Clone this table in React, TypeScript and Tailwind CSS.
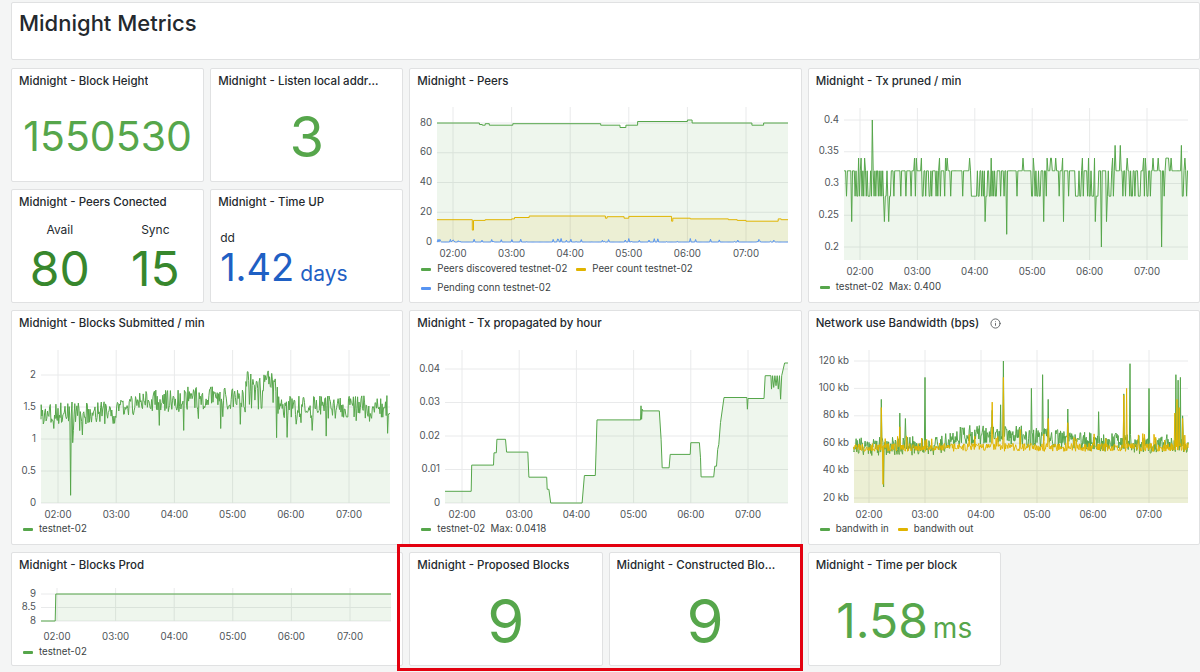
import { Info } from "lucide-react";

type Pt = [number, number];
type Series = { color: string; pts: Pt[]; fill?: boolean };

const GREEN = "#56a64b";
const YELLOW = "#e0b400";
const BLUE = "#5794f2";

function rng(seed: number) {
	let s = seed;
	return () => {
		s = (s * 1664525 + 1013904223) % 4294967296;
		return s / 4294967296;
	};
}

// step function from [t, v] breakpoints
function steps(levels: Pt[], end: number): Pt[] {
	const out: Pt[] = [];
	levels.forEach(([t, v], i) => {
		if (i > 0) out.push([t, levels[i - 1][1]]);
		out.push([t, v]);
	});
	out.push([end, levels[levels.length - 1][1]]);
	return out;
}

function sample(start: number, end: number, dt: number, f: (t: number) => number): Pt[] {
	const out: Pt[] = [];
	for (let t = start; t <= end; t += dt) out.push([t, f(t)]);
	return out;
}

function piece(t: number, segs: Pt[]) {
	let v = segs[0][1];
	for (const [at, val] of segs) if (t >= at) v = val;
	return v;
}

function spikes(t: number, list: Pt[], w = 0.012) {
	for (const [at, v] of list) if (Math.abs(t - at) < w) return v;
	return null;
}

// ---------- data ----------
const peersGreen = steps(
	[[-0.3, 80], [0.45, 79], [0.5, 78.5], [0.55, 79.5], [0.62, 78.5], [1.02, 79.5], [2.52, 78.5], [2.85, 77], [2.95, 78.5], [3.15, 81], [4.0, 82], [4.08, 80], [5.1, 78.5], [5.3, 80]],
	5.75,
);
const peersYellow = steps(
	[[-0.3, 15], [0.33, 8], [0.35, 14.5], [0.55, 15], [1.0, 15.5], [1.05, 16.5], [1.3, 17.5], [2.6, 16], [2.63, 17], [2.92, 16], [3.0, 17.2], [3.73, 14], [3.75, 16], [4.05, 15.5], [4.7, 15], [4.85, 14.5], [5.0, 14], [5.55, 15.5], [5.6, 15]],
	5.75,
);
const peersBlue = (() => {
	const r = rng(11);
	return sample(-0.3, 5.75, 0.015, () => (r() < 0.14 ? r() * 2.4 : 0));
})();

const prunedPts = (() => {
	const r = rng(7);
	const special: Pt[] = [[0.22, 0.4], [2.55, 0.22], [4.2, 0.2], [5.25, 0.2], [4.45, 0.36], [4.53, 0.36], [5.6, 0.36], [-0.15, 0.24], [0.42, 0.24], [0.5, 0.24], [2.18, 0.24], [3.2, 0.24], [3.55, 0.24], [4.1, 0.24], [4.3, 0.24]];
	let busy = false;
	return sample(-0.28, 5.72, 0.015, (t) => {
		const sp = spikes(t, special, 0.008);
		if (sp !== null) return sp;
		if (r() < 0.1) busy = !busy;
		const x = r();
		if (busy) return x < 0.55 ? 0.28 : x < 0.65 ? 0.34 : 0.32;
		return x < 0.1 ? 0.28 : x < 0.16 ? 0.34 : 0.32;
	});
})();

const submittedPts = (() => {
	const r = rng(3);
	const base: Pt[] = [[-0.3, 1.42], [1.0, 1.52], [1.3, 1.62], [2.2, 1.66], [3.22, 1.93], [3.78, 1.52]];
	return sample(-0.3, 5.72, 0.012, (t) => {
		if (Math.abs(t - 0.22) < 0.008) return 0.12;
		if (Math.abs(t - 3.5) < 0.008) return 1.48;
		if (Math.abs(t - 3.76) < 0.008) return 1.02;
		let v = piece(t, base) + (r() - 0.55) * 0.36;
		if (r() < 0.05) v -= 0.3;
		return v;
	});
})();

const propPts: Pt[] = [
	[-0.3, 0.0035], [0.16, 0.0035], [0.17, 0.0113], [0.55, 0.0113], [0.56, 0.015], [0.6, 0.015], [0.61, 0.019], [0.76, 0.019], [0.78, 0.0152],
	[1.15, 0.0152], [1.17, 0.0077], [1.48, 0.0077], [1.49, 0.0041], [1.52, 0.0041], [1.55, 0], [2.1, 0], [2.14, 0.0082], [2.33, 0.0082],
	[2.36, 0.0248], [3.12, 0.0248], [3.13, 0.029], [3.14, 0.025], [3.15, 0.028], [3.16, 0.0275], [3.45, 0.0275], [3.48, 0.019], [3.5, 0.0105],
	[3.62, 0.0105], [3.64, 0.0145], [3.99, 0.0145], [4.0, 0.018], [4.15, 0.018], [4.17, 0.0135], [4.18, 0.0078], [4.4, 0.0078], [4.42, 0.011],
	[4.45, 0.011], [4.47, 0.016], [4.49, 0.0175], [4.52, 0.024], [4.58, 0.0315], [4.98, 0.0315], [4.99, 0.028], [5.0, 0.0312], [5.28, 0.0312],
	[5.3, 0.038], [5.4, 0.038], [5.41, 0.034], [5.43, 0.038], [5.45, 0.0345], [5.47, 0.038], [5.49, 0.035], [5.51, 0.038], [5.53, 0.034], [5.55, 0.038],
	[5.57, 0.031], [5.59, 0.038], [5.64, 0.0418], [5.72, 0.0418],
];

const bwIn = (() => {
	const r = rng(21);
	const base: Pt[] = [[-0.3, 58], [1.3, 61], [1.55, 66], [2.75, 64], [3.3, 63], [3.8, 61], [4.7, 59], [5.2, 60]];
	const sp: Pt[] = [[0.22, 92], [0.26, 28], [0.55, 82], [0.65, 78], [1.0, 108], [2.2, 84], [2.35, 88], [2.4, 120], [2.9, 100], [3.1, 110], [3.2, 92], [3.55, 85], [4.1, 83], [4.55, 96], [4.66, 118], [5.0, 100], [5.48, 110], [5.52, 106], [5.56, 108], [5.6, 80]];
	return sample(-0.3, 5.72, 0.01, (t) => {
		const s = spikes(t, sp, 0.006);
		if (s !== null) return s;
		return piece(t, base) + (r() - 0.5) * 14;
	});
})();

const bwOut = (() => {
	const r = rng(33);
	const sp: Pt[] = [[0.22, 86], [0.25, 30], [0.55, 72], [2.2, 90], [2.4, 108], [2.7, 70], [3.2, 78], [3.55, 75], [4.55, 95], [4.6, 100], [5.46, 82], [5.5, 92], [5.54, 86], [5.6, 78]];
	return sample(-0.3, 5.72, 0.01, (t) => {
		const s = spikes(t, sp, 0.006);
		if (s !== null) return s;
		let v = 57 + (r() - 0.5) * 6;
		if (r() < 0.05) v += 8;
		return v;
	});
})();

// ---------- chart ----------
type ChartProps = {
	h: number;
	left: number;
	right: number;
	top: number;
	bottom: number;
	x0: number;
	hourW: number;
	y: [number, number, number, number];
	yTicks: [number, string][];
	labelY: number;
	series: Series[];
};

function Chart({ h, left, right, top, bottom, x0, hourW, y, yTicks, labelY, series }: ChartProps) {
	const [v1, p1, v2, p2] = y;
	const py = (v: number) => p1 + ((v - v1) * (p2 - p1)) / (v2 - v1);
	const px = (t: number) => x0 + t * hourW;
	const clampX = (x: number) => Math.min(right, Math.max(left, x));
	const hours = [0, 1, 2, 3, 4, 5];

	return (
		<svg width="100%" height={h} className="block shrink-0" overflow="visible">
			{yTicks.map(([v]) => (
				<line key={`h${v}`} x1={left} x2={right} y1={py(v)} y2={py(v)} stroke="#e9eaeb" strokeWidth={1} />
			))}
			{hours.map((i) => (
				<line key={`v${i}`} x1={px(i)} x2={px(i)} y1={top} y2={bottom} stroke="#e9eaeb" strokeWidth={1} />
			))}
			{series.map((s, i) => {
				const line = s.pts.map(([t, v], j) => `${j ? "L" : "M"}${clampX(px(t)).toFixed(1)},${py(v).toFixed(1)}`).join("");
				const fx0 = clampX(px(s.pts[0][0]));
				const fx1 = clampX(px(s.pts[s.pts.length - 1][0]));
				return (
					<g key={i}>
						{s.fill && <path d={`${line}L${fx1},${bottom}L${fx0},${bottom}Z`} fill={s.color} fillOpacity={0.1} />}
						<path d={line} fill="none" stroke={s.color} strokeWidth={1} strokeLinejoin="round" />
					</g>
				);
			})}
			{yTicks.map(([v, label]) => (
				<text key={`yl${v}`} x={left - 5} y={py(v)} textAnchor="end" dominantBaseline="middle" fontSize={9.7} fill="#4f5459" fontFamily="Inter, sans-serif">
					{label}
				</text>
			))}
			{hours.map((i) => (
				<text key={`xl${i}`} x={px(i)} y={labelY} textAnchor="middle" dominantBaseline="middle" fontSize={9.7} fill="#4f5459" fontFamily="Inter, sans-serif">
					{`0${i + 2}:00`}
				</text>
			))}
		</svg>
	);
}

function Legend({ items }: { items: [string, string][] }) {
	return (
		<div className="h-[19px] flex items-center gap-[9px] px-[11px] text-[9.7px] text-[#3b3f44] shrink-0">
			{items.map(([color, label]) => (
				<div key={label} className="flex items-center gap-[6px] whitespace-pre">
					<span className="w-[10px] h-[3px] rounded-[1px]" style={{ background: color }} />
					<span>{label}</span>
				</div>
			))}
		</div>
	);
}

function Panel({ title, children, className = "", info = false }: { title: string; children?: React.ReactNode; className?: string; info?: boolean }) {
	return (
		<div className={`bg-white border border-[#e0e1e2] rounded-[2px] flex flex-col overflow-hidden ${className}`}>
			<div className="h-[25px] pl-[7px] pr-[22px] flex items-center gap-[11px] text-[11.5px] font-medium text-[#24292e] shrink-0">
				<span className="truncate">{title}</span>
				{info && <Info size={11} className="text-[#5b5f63] shrink-0" />}
			</div>
			{children}
		</div>
	);
}

function StatValue({ children, className = "" }: { children: React.ReactNode; className?: string }) {
	return <div className={`flex-1 flex items-center justify-center leading-none text-[#56a64b] pb-[2px] ${className}`}>{children}</div>;
}

export default function App() {
	return (
		<div className="relative w-[1200px] h-[672px] overflow-hidden bg-[#f4f5f5] pl-[11px] pt-[2px] font-['Inter','Noto_Sans',sans-serif] text-[#24292e]">
			<div className="h-[58px] bg-white border border-[#e0e1e2] rounded-[2px] px-[7px] pt-[7px] text-[22px] font-medium leading-[26px]">
				Midnight Metrics
			</div>

			<div className="mt-[8px] grid grid-cols-6 gap-x-[6px] gap-y-[7px] grid-rows-[114px_114px_235px_114px]">
				<Panel title="Midnight - Block Height">
					<StatValue className="text-[41px]">1550530</StatValue>
				</Panel>
				<Panel title="Midnight - Listen local addresses">
					<StatValue className="text-[56px]">3</StatValue>
				</Panel>
				<Panel title="Midnight - Peers" className="col-span-2 row-span-2">
					<Chart
						h={166}
						left={27}
						right={378}
						top={13}
						bottom={148}
						x0={43}
						hourW={58.6}
						y={[80, 29, 0, 148]}
						yTicks={[[0, "0"], [20, "20"], [40, "40"], [60, "60"], [80, "80"]]}
						labelY={160}
						series={[
							{ color: GREEN, pts: peersGreen, fill: true },
							{ color: YELLOW, pts: peersYellow, fill: true },
							{ color: BLUE, pts: peersBlue, fill: true },
						]}
					/>
					<Legend items={[[GREEN, "Peers discovered testnet-02"], [YELLOW, "Peer count testnet-02"]]} />
					<Legend items={[[BLUE, "Pending conn testnet-02"]]} />
				</Panel>
				<Panel title="Midnight - Tx pruned / min" className="col-span-2 row-span-2">
					<Chart
						h={184}
						left={35}
						right={379}
						top={14}
						bottom={166}
						x0={51}
						hourW={57.4}
						y={[0.4, 26, 0.2, 153]}
						yTicks={[[0.2, "0.2"], [0.25, "0.25"], [0.3, "0.3"], [0.35, "0.35"], [0.4, "0.4"]]}
						labelY={178}
						series={[{ color: GREEN, pts: prunedPts, fill: true }]}
					/>
					<Legend items={[[GREEN, "testnet-02  Max: 0.400"]]} />
				</Panel>

				<Panel title="Midnight - Peers Conected">
					<div className="flex-1 grid grid-cols-2 text-center">
						<div className="flex flex-col items-center">
							<span className="text-[12px] mt-[8px] leading-[14px]">Avail</span>
							<span className="text-[48px] leading-none text-[#37872d] mt-[8px]">80</span>
						</div>
						<div className="flex flex-col items-center">
							<span className="text-[12px] mt-[8px] leading-[14px]">Sync</span>
							<span className="text-[48px] leading-none text-[#37872d] mt-[8px]">15</span>
						</div>
					</div>
				</Panel>
				<Panel title="Midnight - Time UP">
					<div className="flex-1 flex flex-col px-[9px]">
						<span className="text-[12px] mt-[16px] leading-[14px]">dd</span>
						<div className="flex items-baseline text-[#1f60c4] mt-[3px] leading-none">
							<span className="text-[38px]">1.42</span>
							<span className="text-[21px] ml-[6px]">days</span>
						</div>
					</div>
				</Panel>

				<Panel title="Midnight - Blocks Submitted / min" className="col-span-2">
					<Chart
						h={184}
						left={29}
						right={378}
						top={14}
						bottom={167}
						x0={46}
						hourW={58.2}
						y={[2, 39, 0, 167]}
						yTicks={[[0, "0"], [0.5, "0.5"], [1, "1"], [1.5, "1.5"], [2, "2"]]}
						labelY={179}
						series={[{ color: GREEN, pts: submittedPts, fill: true }]}
					/>
					<Legend items={[[GREEN, "testnet-02"]]} />
				</Panel>
				<Panel title="Midnight - Tx propagated by hour" className="col-span-2">
					<Chart
						h={184}
						left={35}
						right={378}
						top={14}
						bottom={167}
						x0={52}
						hourW={57.2}
						y={[0.04, 33, 0, 167]}
						yTicks={[[0, "0"], [0.01, "0.01"], [0.02, "0.02"], [0.03, "0.03"], [0.04, "0.04"]]}
						labelY={179}
						series={[{ color: GREEN, pts: propPts, fill: true }]}
					/>
					<Legend items={[[GREEN, "testnet-02  Max: 0.0418"]]} />
				</Panel>
				<Panel title="Network use Bandwidth (bps)" className="col-span-2" info>
					<Chart
						h={184}
						left={45}
						right={379}
						top={14}
						bottom={167}
						x0={60}
						hourW={56}
						y={[120, 25, 20, 162]}
						yTicks={[[20, "20 kb"], [40, "40 kb"], [60, "60 kb"], [80, "80 kb"], [100, "100 kb"], [120, "120 kb"]]}
						labelY={179}
						series={[
							{ color: GREEN, pts: bwIn, fill: true },
							{ color: YELLOW, pts: bwOut, fill: true },
						]}
					/>
					<Legend items={[[GREEN, "bandwith in"], [YELLOW, "bandwith out"]]} />
				</Panel>

				<Panel title="Midnight - Blocks Prod" className="col-span-2">
					<Chart
						h={65}
						left={29}
						right={379}
						top={10}
						bottom={43}
						x0={45}
						hourW={58.6}
						y={[9, 16, 8, 43]}
						yTicks={[[8, "8"], [8.5, "8.5"], [9, "9"]]}
						labelY={59}
						series={[{ color: GREEN, pts: [[-0.3, 8], [-0.03, 8], [-0.02, 9], [5.72, 9]], fill: true }]}
					/>
					<Legend items={[[GREEN, "testnet-02"]]} />
				</Panel>
				<Panel title="Midnight - Proposed Blocks">
					<StatValue className="text-[60px]">9</StatValue>
				</Panel>
				<Panel title="Midnight - Constructed Blocks">
					<StatValue className="text-[60px]">9</StatValue>
				</Panel>
				<Panel title="Midnight - Time per block">
					<StatValue>
						<span className="flex items-baseline">
							<span className="text-[48px]">1.58</span>
							<span className="text-[28px] ml-[5px]">ms</span>
						</span>
					</StatValue>
				</Panel>
			</div>

			<div className="absolute left-[397px] top-[544px] w-[406px] h-[127px] border-[3px] border-[#e3000f] pointer-events-none" />
		</div>
	);
}
